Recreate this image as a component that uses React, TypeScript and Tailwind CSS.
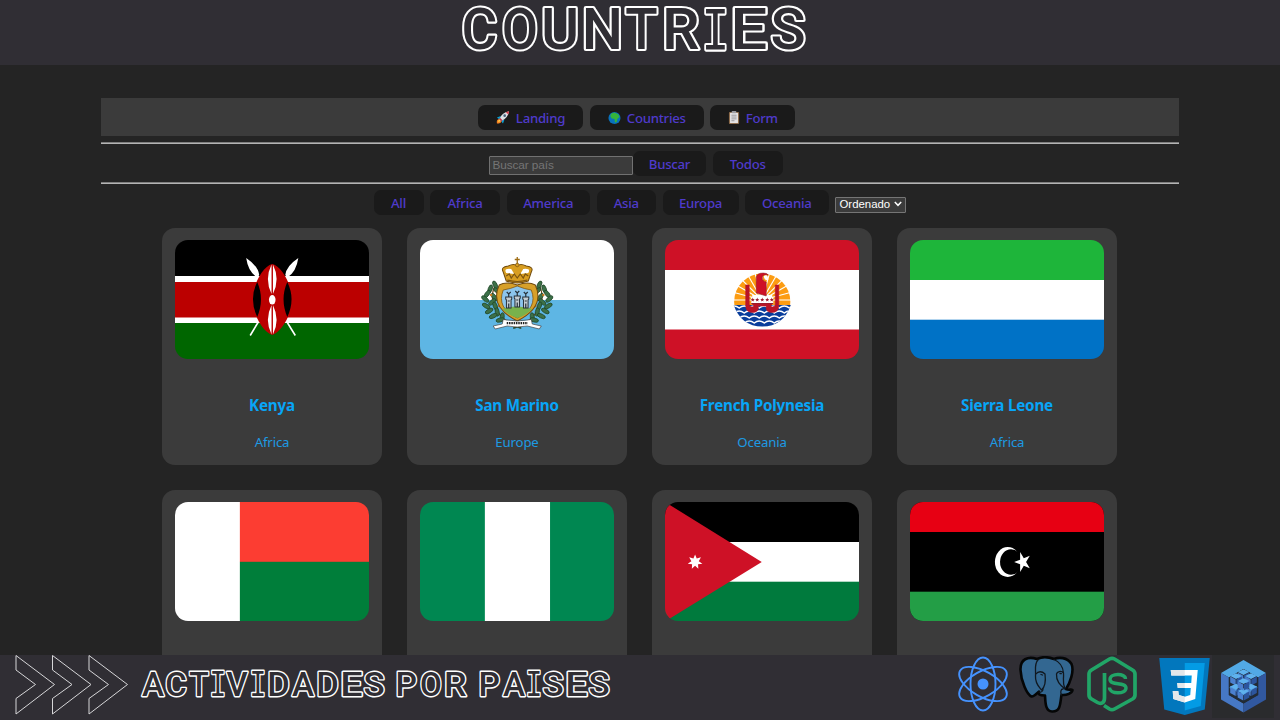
import React from "react";

type LetteringProps = {
  text: string;
  centers: number[];
  width: number;
  height: number;
  baseline: number;
  size: number;
  outline: number;
};

const glyphs: Record<string, { advance: number; factor: number; shift: number }> = {
  A: { advance: 0.67, factor: 0.97, shift: 0 },
  C: { advance: 0.655, factor: 0.97, shift: 0 },
  D: { advance: 0.65, factor: 1.02, shift: -0.01 },
  E: { advance: 0.57, factor: 1.15, shift: -0.02 },
  I: { advance: 0.587, factor: 0.84, shift: 0 },
  N: { advance: 0.71, factor: 1.03, shift: 0 },
  O: { advance: 0.69, factor: 0.93, shift: 0 },
  P: { advance: 0.645, factor: 0.98, shift: -0.02 },
  R: { advance: 0.64, factor: 1.04, shift: -0.02 },
  S: { advance: 0.61, factor: 1.02, shift: 0 },
  T: { advance: 0.61, factor: 0.94, shift: 0 },
  U: { advance: 0.65, factor: 1.04, shift: 0 },
  V: { advance: 0.655, factor: 0.95, shift: 0 },
  " ": { advance: 0.25, factor: 1, shift: 0 },
};

function Lettering({ text, centers, width, height, baseline, size, outline }: LetteringProps) {
  return (
    <svg width={width} height={height} viewBox={`0 0 ${width} ${height}`} className="block shrink-0">
      <text
        y={baseline}
        fontSize={size}
        fill="#302e34"
        stroke="#ffffff"
        strokeWidth={outline}
        strokeLinejoin="round"
        paintOrder="stroke"
        className="font-['Roboto',sans-serif] font-medium"
      >
        {text.split("").map((ch, i) => {
          const { advance, factor, shift } = glyphs[ch];
          const w = advance * factor * size;
          const slab = ch === "I";
          return (
            <tspan
              key={i}
              x={(centers[i] - w / 2 + shift * size).toFixed(2)}
              textLength={w.toFixed(2)}
              lengthAdjust="spacingAndGlyphs"
              fontSize={slab ? size * 0.975 : size}
              className={slab ? "font-['DejaVu_Sans_Mono',monospace] font-normal" : undefined}
            >
              {ch}
            </tspan>
          );
        })}
      </text>
    </svg>
  );
}

const rays = Array.from({ length: 13 }, (_, i) => Math.PI + (i * Math.PI) / 12);

function starPoints(cx: number, cy: number, outer: number, inner: number, n: number, start: number) {
  return Array.from({ length: n * 2 }, (_, i) => {
    const r = i % 2 === 0 ? outer : inner;
    const a = start + (i * Math.PI) / n;
    return `${(cx + r * Math.cos(a)).toFixed(2)},${(cy + r * Math.sin(a)).toFixed(2)}`;
  }).join(" ");
}

function Kenya() {
  return (
    <>
      <rect y="30" width="194" height="60" fill="#fff" />
      <rect width="194" height="36" fill="#000" />
      <rect y="42" width="194" height="35.5" fill="#b00" />
      <rect y="83" width="194" height="36" fill="#060" />
      <path d="M84 37 L120 95.500 M110 37 L75 95.500" stroke="#fff" strokeWidth="1.6" />
      <path d="M71 18 Q73 32 82 37.500 L84 35 Q83 26 71 18Z M123 18 Q121 32 112 37.500 L110 35 Q111 26 123 18Z" fill="#fff" />
      <path d="M97 24 C106 26 116.500 44 116.500 59.500 C116.500 75 106 92 97 95 C88 92 77.500 75 77.500 59.500 C77.500 44 88 26 97 24Z" fill="#b00" />
      <path d="M82 42 Q89.500 59 82 77 Q73.500 59 82 42Z M112 42 Q104.500 59 112 77 Q120.500 59 112 42Z" fill="#000" />
      <path d="M96.300 24.500 Q89 39 96.300 54Z M97.700 24.500 Q105 39 97.700 54Z M96.300 65 Q89 80 96.300 94.500Z M97.700 65 Q105 80 97.700 94.500Z" fill="#fff" />
      <ellipse cx="97" cy="59.800" rx="3.300" ry="4.800" fill="#fff" />
    </>
  );
}

const leaves = [
  [75, 45, -25], [70, 49, 20], [77, 51, -50], [67, 54, 35], [74, 57, -35], [65, 59, -50], [72, 62, 50],
  [66, 66, -60], [75, 66, -20], [69, 71, 60], [77, 72, -10], [73, 76, 65], [82, 77, 5], [80, 80, 75],
];

function SanMarino() {
  return (
    <>
      <rect width="194" height="60" fill="#fff" />
      <rect y="60" width="194" height="60" fill="#5eb6e4" />
      {[1, -1].map((side) => (
        <g key={side} transform={side === 1 ? undefined : "translate(194 0) scale(-1 1)"}>
          <path d="M76 43 Q64 65 90 84" fill="none" stroke="#6b4a1e" strokeWidth="1.200" />
          {leaves.map(([x, y, r], i) => (
            <ellipse key={i} cx={x} cy={y} rx="2" ry="4.300" transform={`rotate(${r} ${x} ${y})`} fill="#3c7048" stroke="#1d4427" strokeWidth=".7" />
          ))}
          <circle cx="71" cy="55" r="1.200" fill="#c8781c" />
          <circle cx="79" cy="66" r="1.200" fill="#c8781c" />
          <path d="M92 82 Q98 88 101 88" fill="none" stroke="#2b482d" strokeWidth="1.800" />
        </g>
      ))}
      <path d="M79 45 Q86 41 97 45 Q108 41 115 45 Q125 67 97 81 Q69 67 79 45Z" fill="#d7a02a" stroke="#6f4a10" strokeWidth="1" />
      <path d="M83 50 Q90 49 97 46 Q104 49 111 50 Q118 68 97 78 Q76 68 83 50Z" fill="#8cc5ec" stroke="#83570f" strokeWidth=".8" />
      <path d="M82 69 Q97 64 112 69 Q105 76 97 78 Q89 76 82 69Z" fill="#78b24c" />
      {[88.500, 97, 105.500].map((x, i) => (
        <g key={x} transform={`translate(${x} ${i === 1 ? 52 : 53})`}>
          <path d="M-3 6 V4 H3 V6 L2.300 7 V15 H-2.300 V7Z" fill="#c3ccd2" stroke="#263038" strokeWidth="1" />
          <path d="M0 4 V1 M-2 -1 L0 1 L2 -1 M-1 8 H1 M0 10.500 V15" stroke="#263038" strokeWidth="1.200" fill="none" />
        </g>
      ))}
      <path d="M86 41 L83 32 Q80 27 88 26 Q94 23 97 26 Q100 23 106 26 Q114 27 111 32 L108 41 Q97 45 86 41Z" fill="#d89e21" stroke="#704a0c" strokeWidth="1" />
      <path d="M86 33 Q83 28 91 29 L94 34Z M108 33 Q111 28 103 29 L100 34Z" fill="#fff" />
      <path d="M86 36 L89 34 L91 38 L94 34 L97 38 L100 34 L103 38 L105 34 L108 36 M87 40 Q97 43 107 40" fill="none" stroke="#7c5410" strokeWidth="1.200" />
      <path d="M97 26 V17 M94.500 19.500 H99.500" stroke="#9e6c13" strokeWidth="1.300" />
      <circle cx="97" cy="25" r="1.800" fill="#d89e21" stroke="#704a0c" strokeWidth=".6" />
      <path d="M83 79.500 Q97 82.500 111 79.500 L112 84 L121 86 L119 89 L107 86 Q97 88 87 86 L75 89 L73 86 L82 84Z" fill="#fff" stroke="#444" strokeWidth=".7" />
      <path d="M86.500 83.200 H107.500" stroke="#222" strokeWidth="2.200" strokeDasharray="1.500 .8" />
    </>
  );
}

function Polynesia() {
  return (
    <>
      <rect width="194" height="119" fill="#ce1126" />
      <rect y="30" width="194" height="59.500" fill="#fff" />
      <clipPath id="emblem-sky"><rect x="68" y="30" width="58" height="35" /></clipPath>
      <clipPath id="emblem-sea"><path d="M68.500 65 H125.500 Q118 86.500 97 86.500 Q76 86.500 68.500 65Z" /></clipPath>
      <g clipPath="url(#emblem-sky)">
        <circle cx="97" cy="61.500" r="28" fill="#fc9c12" />
        {rays.map((a, i) => (
          <path key={i} d={`M97 60 L${97 + 30 * Math.cos(a)} ${60 + 30 * Math.sin(a)}`} stroke="#fff" strokeWidth="1.100" />
        ))}
      </g>
      <g clipPath="url(#emblem-sea)">
        <rect x="68" y="64" width="58" height="24" fill="#083d9c" />
        {[68, 73, 78, 83].map((y, i) => (
          <path key={y} d={`M${64 - (i % 2) * 5} ${y} q5 -4 10 0 q5 -4 10 0 q5 -4 10 0 q5 -4 10 0 q5 -4 10 0 q5 -4 10 0 q5 -4 10 0`} fill="none" stroke="#fff" strokeWidth="1.500" />
        ))}
      </g>
      <path d="M87 55 H107 V64 H87Z" fill="#fff" />
      <path d="M80.500 45 H84 V64 Q84 67 87 67 Q90 66 87 64 H107 Q104 66 107 67 Q110 67 110 64 V45 H113.500 V66 Q113 73 106 72.500 Q100 72 101 66 H93 Q94 72 88 72.500 Q81 73 80.500 66Z" fill="#b91427" stroke="#b91427" strokeWidth=".6" />
      <path d="M91 53 V37 Q92 33 98 33 Q102 33 103 35 Q97 34 97 38 Q97 41 101 42 V56Z" fill="#ce1126" stroke="#84202a" strokeWidth=".5" />
      <path d="M98.500 36 Q103 33.500 103 40 Q99 41 98.500 36Z" fill="#fff" />
      <path d="M86 57 H108 V64 H86Z" fill="#fff" />
      {[87.500, 92, 97, 102, 106.500].map((x) => (
        <polygon key={x} points={starPoints(x, 59.800, 2.200, 0.900, 5, -Math.PI / 2)} fill="#9d1b2b" />
      ))}
      <path d="M86 63.500 H108" stroke="#9d1b2b" strokeWidth="1" />
    </>
  );
}

function SierraLeone() {
  return (
    <>
      <rect width="194" height="41" fill="#1eb53a" />
      <rect y="40" width="194" height="40" fill="#fff" />
      <rect y="79.700" width="194" height="40" fill="#0072c6" />
    </>
  );
}

function Madagascar() {
  return (
    <>
      <rect width="65" height="119" fill="#fff" />
      <rect x="64.700" width="130" height="60" fill="#fc3d32" />
      <rect x="64.700" y="59.800" width="130" height="60" fill="#007e3a" />
    </>
  );
}

function Nigeria() {
  return (
    <>
      <rect width="194" height="119" fill="#008751" />
      <rect x="64.700" width="65" height="119" fill="#fff" />
    </>
  );
}

function Jordan() {
  return (
    <>
      <rect y="30" width="194" height="60" fill="#fff" />
      <rect width="194" height="40" fill="#000" />
      <rect y="79.700" width="194" height="40" fill="#007a3d" />
      <path d="M0 0 L96.500 60 L0 119.500Z" fill="#ce1126" />
      <polygon points={starPoints(30, 60, 7.500, 3.800, 7, -Math.PI / 2)} fill="#fff" />
    </>
  );
}

function Libya() {
  return (
    <>
      <rect width="194" height="119" fill="#000" />
      <rect width="194" height="30" fill="#e70013" />
      <rect y="89.700" width="194" height="30" fill="#239e46" />
      <ellipse cx="97.500" cy="60" rx="12.800" ry="15" fill="#fff" />
      <ellipse cx="100.800" cy="60" rx="11" ry="12.800" fill="#000" />
      <g transform="translate(112.500 60) scale(.82 1)">
        <polygon points={starPoints(0, 0, 10.500, 4, 5, Math.PI)} fill="#fff" />
      </g>
    </>
  );
}

type Country = { id: string; label?: string; region?: string; Flag: () => React.ReactElement };

const countries: Country[] = [
  { id: "ke", label: "Kenya", region: "Africa", Flag: Kenya },
  { id: "sm", label: "San Marino", region: "Europe", Flag: SanMarino },
  { id: "pf", label: "French Polynesia", region: "Oceania", Flag: Polynesia },
  { id: "sl", label: "Sierra Leone", region: "Africa", Flag: SierraLeone },
  { id: "mg", Flag: Madagascar },
  { id: "ng", Flag: Nigeria },
  { id: "jo", Flag: Jordan },
  { id: "ly", Flag: Libya },
];

function Button({ width, children }: { width: string; children: React.ReactNode }) {
  return (
    <button className={`${width} flex h-[25px] shrink-0 items-center justify-center gap-[6px] rounded-[7px] bg-[#1a1a1a] pt-[1px] text-[13.200px] leading-[22px] font-medium tracking-[-0.250px] whitespace-nowrap text-[#4f3acb]`}>
      {children}
    </button>
  );
}

function Rocket() {
  return (
    <svg width="14" height="15" viewBox="0 0 15 15">
      <path d="M1 14 Q0 9 4 9 L6 11 Q6 14 1 14Z" fill="#f58220" />
      <path d="M2.500 12.500 Q2 10 4 10 L5 11Z" fill="#ffd34e" />
      <path d="M5 6 L1 7.500 L3 9 L5 8Z M9 10 L7.500 14 L6 12 L7 10Z" fill="#0b9ed0" />
      <path d="M3.500 9.500 Q6 2 14 .7 Q13 8 5.500 11.500Z" fill="#dcdfe3" />
      <path d="M10.500 1.800 L14 .7 L13.200 4.300Z" fill="#dc3545" />
      <circle cx="9.300" cy="5.500" r="1.400" fill="#49647d" />
      <path d="M3.500 9.500 L5.500 11.500 L7 10.500 L4.300 7.800Z" fill="#b83649" />
    </svg>
  );
}

function Globe() {
  return (
    <svg width="13" height="14" viewBox="0 0 14 14">
      <circle cx="7" cy="7" r="6.500" fill="#0872bd" />
      <path d="M3 3 Q5 1 8 1.500 L11 3 L12.500 6 L10 8 L9.500 11 L7.500 12 L7 8 L4 7.500 L2.500 5Z" fill="#35b43b" />
    </svg>
  );
}

function Clipboard() {
  return (
    <svg width="12" height="15" viewBox="0 0 13 15">
      <rect x="1" y="1.500" width="11" height="13" rx="1" fill="#8e6d4d" />
      <rect x="2.200" y="2.500" width="8.600" height="11" fill="#e5e4e6" />
      <rect x="4" y=".5" width="5" height="2.500" rx=".8" fill="#9b9ca1" />
      <path d="M3.700 5 H9.300 M3.700 7 H9.300 M3.700 9 H9.300 M3.700 11 H7" stroke="#8a8a90" strokeWidth=".9" />
    </svg>
  );
}

function Divider() {
  return <hr className="h-[2px] shrink-0 border-0 border-t border-b border-t-[#7f7f7f] border-b-[#b4b4b4]" />;
}

function Chevrons() {
  return (
    <svg width="116" height="62" viewBox="0 0 116 62" className="block shrink-0" fill="none" stroke="#d6d6d8" strokeWidth="1">
      {[2, 38.500, 75].map((x) => (
        <path key={x} d={`M${x} .5 L${x + 38.500} 29.500 L${x} 59 V43.500 L${x + 19.500} 29.500 L${x} 15Z`} />
      ))}
    </svg>
  );
}

function ReactLogo() {
  return (
    <svg width="52" height="58" viewBox="-26 -29 52 58" fill="none" stroke="#4592fd" strokeWidth="1.900">
      {[30, 90, 150].map((a) => (
        <ellipse key={a} rx="26.500" ry="12.500" transform={`rotate(${a})`} />
      ))}
      <circle r="5.500" fill="#4592fd" stroke="none" />
    </svg>
  );
}

function PostgresLogo() {
  return (
    <svg width="56" height="58" viewBox="0 0 56 58" fill="#336791" stroke="#050606" strokeWidth="2.600" strokeLinejoin="round" strokeLinecap="round">
      <path d="M18 3 C9 0 1 3 1.500 14 C2 25 8 39 12.500 40.500 C15 41 18 37 20 35.500 C19 38 20 39.500 26 39.500 C26.500 46 26 55 33 55.500 C42 56 41 47 42.500 39 C48 39.500 53 37 53.500 34 C52 33 50 34.500 47 33 C51 27 55.500 15 52.500 8 C48 1 40 1 35 3 C29 .8 22 1 18 3Z" />
      <g fill="none" stroke="#101820" strokeWidth="1.300">
        <path d="M19 4 C15 8 17 13 16.500 20 C16 28 21 32 22.500 34 C26 31 27 26 26 18 C23 15 19 15 17 18" />
        <path d="M35 3.500 C41 6 44 11 44.500 17 C45 24 43 26 46 33 M44.500 17 C42 14 38 16 37.500 18 C37 25 41 29 46 33 M20 36 C22 37 24 35 24 33 M42.500 39 C41 36 42 33 44 33" />
        <path d="M22 18.500 l1.500 .5 M41 17.500 l1.300 .2" />
      </g>
    </svg>
  );
}

function NodeLogo() {
  return (
    <svg width="50" height="57" viewBox="0 0 50 57" fill="none" stroke="#21a567" strokeWidth="3.700" strokeLinejoin="round">
      <path d="M17.500 17 V42 C17.500 47 14 48.500 10.500 46.500 L4.500 43 Q2 41.500 2 39 V18 Q2 15.500 4.500 14 L22.500 3 Q25 1.600 27.500 3 L45.500 14 Q48 15.500 48 18 V39 Q48 41.500 45.500 43 L27.500 53 Q25 54.500 22.500 53 L17 49.500" />
      <path d="M38.500 23 C38.500 17 23 17 23 23.500 C23 30 39 25.500 39 32 C39 38.500 22.500 38.500 22.500 31.500" strokeWidth="3.400" />
    </svg>
  );
}

function CssLogo() {
  return (
    <svg width="51" height="57" viewBox="0 0 50.500 57">
      <path d="M0 0 H50.500 L45.500 51.500 L25.500 57 L5 51.500Z" fill="#0277bd" />
      <path d="M25.500 5 H45.500 L41.500 48 L25.500 52.500Z" fill="#039be5" />
      <path d="M11.500 12 H38.500 L36 41 L25.500 44.500 L14 41 L13.500 33 H19 L19.500 37 L25.500 38.800 L31 37 L31.500 30 H18.500 L18 25 H32 L32.500 17.500 H12Z" fill="#fff" />
      <path d="M11.500 12 H25.500 V17.500 H12Z M18 25 H25.500 V30 H18.500Z M13.500 33 H19 L19.500 37 L25.500 38.800 V44.500 L14 41Z" fill="#e3e7ea" />
    </svg>
  );
}

function Cube({ x, y }: { x: number; y: number }) {
  return (
    <g transform={`translate(${x} ${y})`}>
      <path d="M0 -5.800 L5.800 -2.900 L0 0 L-5.800 -2.900Z" fill="#5fb2ee" />
      <path d="M-5.800 -2.500 L-.3 .4 V6.500 L-5.800 3.600Z" fill="#4b80cf" />
      <path d="M5.800 -2.500 L.3 .4 V6.500 L5.800 3.600Z" fill="#2c559d" />
    </g>
  );
}

function SequelizeLogo() {
  return (
    <svg width="45" height="53" viewBox="0 0 45 53">
      <path d="M22.500 0 L45 13 L37 17.500 L22.500 9 L8 17.500 L0 13Z" fill="#52a9e5" />
      <path d="M0 13 L8 17.500 V35 L22.500 43.500 V52.500 L0 39.500Z" fill="#4678c5" />
      <path d="M45 13 L37 17.500 V35 L22.500 43.500 V52.500 L45 39.500Z" fill="#31589f" />
      <path d="M22.500 9 L37.300 17.500 V35 L22.500 43.500 L7.700 35 V17.500Z" fill="#222b35" />
      <path d="M9 27 L22.500 34 L36 27" fill="none" stroke="#55a9e8" strokeWidth="2" />
      <Cube x={22.500} y={15} />
      <Cube x={15} y={19} />
      <Cube x={30} y={19} />
      <Cube x={15} y={29.500} />
      <Cube x={30} y={29.500} />
      <Cube x={22.500} y={34} />
      <Cube x={22.500} y={24} />
    </svg>
  );
}

export default function App() {
  return (
    <div className="flex h-[720px] w-[1280px] flex-col overflow-hidden bg-[#242424] font-['Noto_Sans','Open_Sans',sans-serif]">
      <header className="h-[65px] shrink-0 bg-[#302e34] pl-[440px]">
        <Lettering
          text="COUNTRIES"
          centers={[39.500, 80, 120, 162.500, 201.500, 242, 275.500, 310, 348]}
          width={400}
          height={65}
          baseline={48.500}
          size={56.500}
          outline={4.200}
        />
      </header>

      <main className="flex h-[590px] shrink-0 flex-col overflow-hidden px-[101px] pt-[33px]">
        <nav className="flex h-[38px] shrink-0 items-center justify-center gap-[6.500px] bg-[#3b3b3b] pr-[7px]">
          <Button width="w-[105.500px]"><Rocket />Landing</Button>
          <Button width="w-[114px]"><Globe />Countries</Button>
          <Button width="w-[85px]"><Clipboard />Form</Button>
        </nav>
        <div className="h-[6px] shrink-0" />
        <Divider />
        <div className="flex h-[38px] shrink-0 items-start justify-center pt-[6.500px] pr-[8px]">
          <input
            placeholder="Buscar país"
            className="mt-[5.500px] h-[19px] w-[144px] rounded-[1px] border border-[#717171] bg-[#3b3b3b] px-[2.500px] pb-[2px] font-['Liberation_Sans',sans-serif] text-[11.800px] tracking-[-0.100px] placeholder:text-[#757575]"
          />
          <Button width="w-[73px]">Buscar</Button>
          <div className="w-[6.500px] shrink-0" />
          <Button width="w-[70.500px]">Todos</Button>
        </div>
        <Divider />
        <div className="flex h-[44px] shrink-0 items-start justify-center gap-[6.500px] pt-[6px] pr-px">
          <Button width="w-[50px]">All</Button>
          <Button width="w-[70px]">Africa</Button>
          <Button width="w-[83.500px]">America</Button>
          <Button width="w-[59.500px]">Asia</Button>
          <Button width="w-[76px]">Europa</Button>
          <Button width="w-[83.500px]">Oceania</Button>
          <div className="mt-[6.500px] flex h-[16px] w-[70.500px] shrink-0 items-center justify-between rounded-[1px] border border-[#757575] bg-[#3b3b3b] pr-[3px] pb-px pl-[3.500px] font-['Liberation_Sans',sans-serif] text-[11.400px] leading-[13px] text-white">
            Ordenado
            <svg width="8" height="6" viewBox="0 0 8 6" fill="none" stroke="#fff" strokeWidth="1.500"><path d="M.8 1 L4 4.300 L7.200 1" /></svg>
          </div>
        </div>
        <section className="grid shrink-0 grid-cols-[220px_220px_220px_220px] gap-[25px] pl-[61px]">
          {countries.map(({ id, label, region, Flag }) => (
            <article key={id} className="flex h-[237px] flex-col items-center rounded-[13px] bg-[#3b3b3b] pt-[12.400px]">
              <svg viewBox="0 0 194 119" preserveAspectRatio="none" className="block h-[119px] w-[194.500px] shrink-0 rounded-[13px]">
                <Flag />
              </svg>
              {label && <h2 className="mt-[35px] text-[15.200px] leading-[22px] font-bold tracking-[-0.200px] text-[#08a5f7]">{label}</h2>}
              {region && <p className="mt-[16px] text-[13.200px] leading-[20px] tracking-[-0.150px] text-[#1d9ae3]">{region}</p>}
            </article>
          ))}
        </section>
      </main>

      <footer className="flex h-[65px] shrink-0 items-start bg-[#302e34] pl-[14px]">
        <Chevrons />
        <Lettering
          text="ACTIVIDADES POR PAISES"
          centers={[23, 46, 69, 88, 107, 128, 149, 173, 198, 222, 244, 261, 277, 301, 326, 343, 360, 384, 404, 423, 447, 469]}
          width={500}
          height={65}
          baseline={40.500}
          size={34}
          outline={2.800}
        />
        <div className="flex h-[65px] shrink-0 items-start pl-[327px]">
          <ReactLogo />
          <div className="mt-px ml-[10px]"><PostgresLogo /></div>
          <div className="mt-px ml-[12px]"><NodeLogo /></div>
          <div className="mt-[3px] ml-[22px] w-[51px]"><CssLogo /></div>
          <div className="ml-[2px] flex h-[63px] w-[62px] justify-center bg-[#2a2b2d] pt-[5px]"><SequelizeLogo /></div>
        </div>
      </footer>
    </div>
  );
}
